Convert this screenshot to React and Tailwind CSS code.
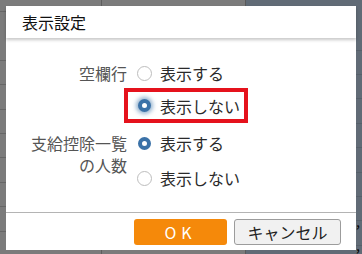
import React from "react";

const font = { fontFamily: '"Noto Sans CJK JP", "Noto Sans", sans-serif' };

function Radio({ checked, focus }) {
  if (checked) {
    return (
      <span
        className={
          "inline-block w-[13px] h-[13px] rounded-full border-[4px] border-[#3b72a8] bg-white shrink-0 " +
          (focus ? "shadow-[0_0_4px_2px_rgba(59,114,168,0.55)]" : "")
        }
      />
    );
  }
  return (
    <span className="inline-block w-[15px] h-[15px] rounded-full border border-[#bdbdbd] bg-white shrink-0" />
  );
}

function Option({ checked, focus, label }) {
  return (
    <div className="flex items-center h-[24px]">
      <div className="w-[24px] flex justify-center">
        <Radio checked={checked} focus={focus} />
      </div>
      <span className="ml-[4px] text-[16px] text-[#2a2a2a] leading-none">{label}</span>
    </div>
  );
}

export default function App() {
  const leftLines = [11, 60, 84, 109, 133, 157, 182, 206, 231];
  const rightLines = [50, 74, 98, 123, 147, 172, 196, 220, 245];
  return (
    <div className="relative w-[362px] h-[254px] overflow-hidden" style={font}>
      {/* background sheet */}
      <div className="flex w-full h-full">
        <div className="relative w-[246px] h-full bg-[#7b7b7b] border-r border-[#5a5a5a]">
          {leftLines.map((y) => (
            <div key={y} className="absolute left-0 right-0 h-px bg-[#666]" style={{ top: y }} />
          ))}
          <div className="absolute top-0 bottom-0 left-[101px] w-px bg-[#5e5e5e]" />
        </div>
        <div className="relative flex-1 h-full bg-[#616b76]">
          {rightLines.map((y) => (
            <div key={y} className="absolute left-0 right-0 h-px bg-[#56606a]" style={{ top: y }} />
          ))}
          <div className="absolute left-[110px] top-[214px] text-[14px] leading-none text-black">,</div>
          <div className="absolute left-[110px] top-[238px] text-[14px] leading-none text-black">,</div>
        </div>
      </div>

      {/* dialog */}
      <div className="absolute left-[6px] top-[6px] w-[350px] h-[244px] bg-white flex flex-col">
        <div className="h-[32px] flex items-center pl-[16px] text-[16px] text-[#111] shadow-[0_2px_3px_rgba(0,0,0,0.22)] relative z-10">
          表示設定
        </div>
        <div className="flex-1 flex flex-col pt-[23px]">
          <div className="flex">
            <div className="w-[121px] text-right text-[16px] text-[#555] h-[24px] flex items-center justify-end leading-none">
              空欄行
            </div>
            <div className="ml-[5px]">
              <Option label="表示する" />
            </div>
          </div>
          <div className="flex mt-[3px]">
            <div className="w-[118px]" />
            <div className="border-[4px] border-[#e5121c] w-[124px] h-[35px] flex items-center pl-[4px]">
              <Option checked focus label="表示しない" />
            </div>
          </div>
          <div className="flex mt-[8px]">
            <div className="w-[121px] text-right text-[16px] text-[#555] leading-[22px] pt-px">
              <div>支給控除一覧</div>
              <div>の人数</div>
            </div>
            <div className="ml-[5px] flex flex-col gap-[11px]">
              <Option checked label="表示する" />
              <Option label="表示しない" />
            </div>
          </div>
        </div>
        <div className="h-[38px] border-t border-[#b4b4b4] flex items-center justify-end pr-[15px] gap-[7px]">
          <button className="w-[93px] h-[26px] rounded-[3px] bg-[#f5890a] text-white text-[16px] leading-none tracking-[5px] flex items-center justify-center">
            OK
          </button>
          <button className="w-[107px] h-[26px] rounded-[3px] bg-[#f1f1f1] border border-[#9c9c9c] text-[#222] text-[16px] leading-none flex items-center justify-center">
            キャンセル
          </button>
        </div>
      </div>
    </div>
  );
}
